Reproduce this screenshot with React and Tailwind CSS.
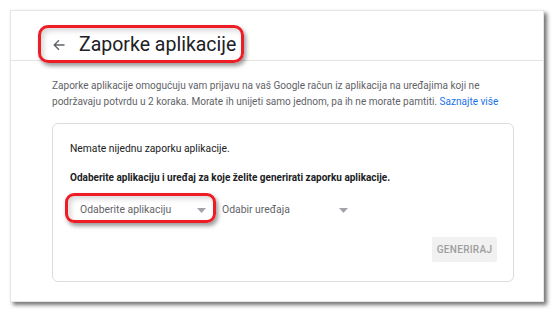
import React from "react";

function Caret() {
  return (
    <svg width="9" height="5" viewBox="0 0 9 5" className="shrink-0">
      <path d="M0 0 L9 0 L4.5 5 Z" fill="#a0a4a8" />
    </svg>
  );
}

function Select({ label }) {
  return (
    <div className="flex w-[142px] h-[24px] items-center justify-between pl-[10px] pr-[6px]">
      <span className="text-[10.4px] text-[#5f6368]">{label}</span>
      <Caret />
    </div>
  );
}

export default function App() {
  return (
    <div
      className="relative w-[554px] h-[313px] bg-white overflow-hidden"
      style={{ fontFamily: "Roboto, 'Liberation Sans', sans-serif" }}
    >
      <div className="absolute left-[10px] top-[10px] w-[534px] h-[292px] bg-white border border-[#e6e6e6] shadow-[3px_3px_4px_rgba(0,0,0,0.55)]">
        <header className="flex items-center h-[50px] pt-[18px] pl-[42px] border-b border-[#e3e3e3]">
          <svg width="12" height="12" viewBox="0 0 12 12" className="shrink-0">
            <path
              d="M11.5 6 H1.2 M6 1.2 L1.2 6 L6 10.8"
              fill="none"
              stroke="#5f6368"
              strokeWidth="1.3"
            />
          </svg>
          <h1 className="ml-[14px] text-[19.5px] leading-[24px] text-[#202124]">
            Zaporke aplikacije
          </h1>
        </header>

        <div className="px-[41px] pt-[17px]">
          <p className="text-[10.05px] leading-[15.5px] text-[#5f6368] whitespace-nowrap">
            Zaporke aplikacije omogućuju vam prijavu na vaš Google račun iz aplikacija na uređajima koji ne
            <br />
            podržavaju potvrdu u 2 koraka. Morate ih unijeti samo jednom, pa ih ne morate pamtiti.{" "}
            <a href="#" className="text-[#1a73e8]">
              Saznajte više
            </a>
          </p>

          <section className="mt-[14px] w-[462px] h-[159px] rounded-[6px] border border-[#dadce0] pl-[17px] pr-[16px] pt-[17px]">
            <p className="text-[10.3px] leading-[16px] text-[#202124]">
              Nemate nijednu zaporku aplikacije.
            </p>
            <p className="mt-[13px] text-[10px] leading-[16px] font-bold text-[#202124]">
              Odaberite aplikaciju i uređaj za koje želite generirati zaporku aplikacije.
            </p>
            <div className="mt-[12px] flex items-center">
              <Select label="Odaberite aplikaciju" />
              <Select label="Odabir uređaja" />
            </div>
            <div className="mt-[15px] flex justify-end">
              <button className="h-[25px] w-[65px] rounded-[2px] bg-[#f1f1f1] text-[10px] font-medium tracking-[0.3px] text-[#9e9e9e]">
                GENERIRAJ
              </button>
            </div>
          </section>
        </div>
      </div>

      <div className="absolute left-[38px] top-[25px] w-[206px] h-[38px] rounded-[10px] border-[3px] border-[#ee1c24] shadow-[2px_3px_4px_rgba(0,0,0,0.4),inset_3px_3px_5px_rgba(0,0,0,0.15)]" />
      <div className="absolute left-[65px] top-[193px] w-[151px] h-[30px] rounded-[9px] border-[3px] border-[#ee1c24] shadow-[2px_3px_4px_rgba(0,0,0,0.4),inset_3px_3px_5px_rgba(0,0,0,0.15)]" />
    </div>
  );
}
